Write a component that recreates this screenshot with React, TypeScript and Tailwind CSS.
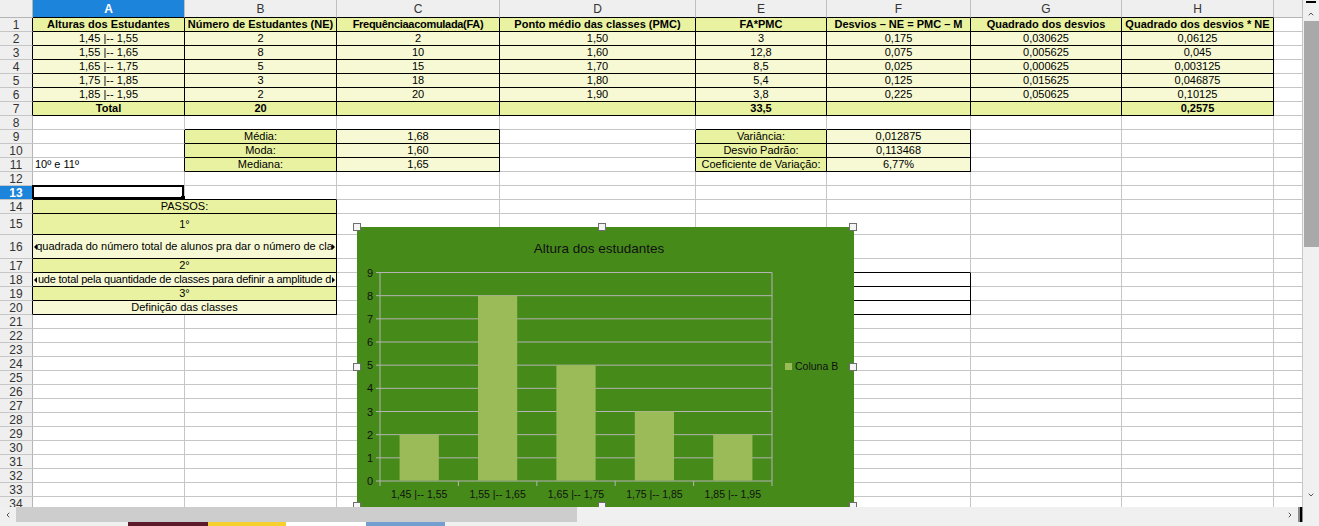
import type { ReactNode } from 'react';
import { ChevronDown, ChevronLeft, ChevronRight, ChevronUp } from 'lucide-react';

// column widths include the right grid line
const COL_W = [
  'w-[152px]',
  'w-[152px]',
  'w-[163px]',
  'w-[196px]',
  'w-[131px]',
  'w-[144px]',
  'w-[151px]',
  'w-[152px]',
  'flex-1 min-w-0',
];
const LETTERS = ['A', 'B', 'C', 'D', 'E', 'F', 'G', 'H', ''];

type Tone = 'strong' | 'pale';

interface Cell {
  col: number;
  span?: number;
  text?: ReactNode;
  tone?: Tone;
  bold?: boolean;
  boxed?: boolean;
  left?: boolean;
  clip?: boolean;
  tight?: boolean;
  cursor?: boolean;
}

interface Row {
  n: number;
  h: string;
  cells: Cell[];
}

function Wavy({ children }: { children: ReactNode }) {
  return (
    <span className="underline decoration-wavy decoration-[#e8261f] decoration-1 underline-offset-2">
      {children}
    </span>
  );
}

const box = (col: number, text: ReactNode, tone?: Tone, bold = false): Cell => ({
  col,
  text,
  tone,
  bold,
  boxed: true,
});

const DATA = [
  ['1,45 |-- 1,55', '2', '2', '1,50', '3', '0,175', '0,030625', '0,06125'],
  ['1,55 |-- 1,65', '8', '10', '1,60', '12,8', '0,075', '0,005625', '0,045'],
  ['1,65 |-- 1,75', '5', '15', '1,70', '8,5', '0,025', '0,000625', '0,003125'],
  ['1,75 |-- 1,85', '3', '18', '1,80', '5,4', '0,125', '0,015625', '0,046875'],
  ['1,85 |-- 1,95', '2', '20', '1,90', '3,8', '0,225', '0,050625', '0,10125'],
];

const HEAD: ReactNode[] = [
  'Alturas dos Estudantes',
  'Número de Estudantes (NE)',
  <span>
    Frequência<Wavy>acomulada(FA)</Wavy>
  </span>,
  <span>
    Ponto médio das classes <Wavy>(PMC)</Wavy>
  </span>,
  <Wavy>FA*PMC</Wavy>,
  <span>
    Desvios – NE = <Wavy>PMC</Wavy> – M
  </span>,
  'Quadrado dos desvios',
  'Quadrado dos desvios * NE',
];

const ROWS: Row[] = [];
ROWS.push({
  n: 1,
  h: 'h-[14px]',
  cells: HEAD.map((t, i) => ({ ...box(i, t, 'strong', true), tight: i === 2 })),
});
DATA.forEach((r, i) =>
  ROWS.push({ n: i + 2, h: 'h-[14px]', cells: r.map((t, c) => box(c, t, 'pale')) }),
);
ROWS.push({
  n: 7,
  h: 'h-[14px]',
  cells: ['Total', '20', '', '', '33,5', '', '', '0,2575'].map((t, c) => box(c, t, 'strong', true)),
});
ROWS.push({ n: 8, h: 'h-[14px]', cells: [] });
ROWS.push({
  n: 9,
  h: 'h-[14px]',
  cells: [box(1, 'Média:', 'strong'), box(2, '1,68', 'pale'), box(4, 'Variância:', 'strong'), box(5, '0,012875', 'pale')],
});
ROWS.push({
  n: 10,
  h: 'h-[14px]',
  cells: [box(1, 'Moda:', 'strong'), box(2, '1,60', 'pale'), box(4, 'Desvio Padrão:', 'strong'), box(5, '0,113468', 'pale')],
});
ROWS.push({
  n: 11,
  h: 'h-[14px]',
  cells: [
    { col: 0, text: '10º e 11º', left: true },
    box(1, 'Mediana:', 'strong'),
    box(2, '1,65', 'pale'),
    box(4, 'Coeficiente de Variação:', 'strong'),
    box(5, '6,77%', 'pale'),
  ],
});
ROWS.push({ n: 12, h: 'h-[14px]', cells: [] });
ROWS.push({ n: 13, h: 'h-[14px]', cells: [{ col: 0, cursor: true }] });
ROWS.push({ n: 14, h: 'h-[14px]', cells: [{ ...box(0, 'PASSOS:', 'strong'), span: 2 }] });
ROWS.push({ n: 15, h: 'h-[21px]', cells: [{ ...box(0, '1°', 'strong'), span: 2 }] });
ROWS.push({
  n: 16,
  h: 'h-[24px]',
  cells: [{ ...box(0, 'quadrada do número total de alunos pra dar o número de cla', 'pale'), span: 2, clip: true }],
});
ROWS.push({ n: 17, h: 'h-[14px]', cells: [{ ...box(0, '2°', 'strong'), span: 2 }] });
ROWS.push({
  n: 18,
  h: 'h-[14px]',
  cells: [
    {
      ...box(0, 'ude total pela quantidade de classes para definir a amplitude d', 'pale'),
      span: 2,
      clip: true,
      tight: true,
    },
    box(4, ''),
    box(5, ''),
  ],
});
ROWS.push({ n: 19, h: 'h-[14px]', cells: [{ ...box(0, '3°', 'strong'), span: 2 }, box(4, ''), box(5, '')] });
ROWS.push({
  n: 20,
  h: 'h-[14px]',
  cells: [{ ...box(0, 'Definição das classes', 'pale'), span: 2 }, box(4, ''), box(5, '')],
});
for (let n = 21; n <= 34; n++) ROWS.push({ n, h: 'h-[14px]', cells: [] });

function boxedAt(ri: number, col: number) {
  const row = ROWS[ri];
  if (!row) return false;
  return row.cells.some((c) => c.boxed && col >= c.col && col < c.col + (c.span ?? 1));
}

function CellContent({ cell }: { cell: Cell }) {
  if (cell.cursor) {
    return (
      <div className="absolute -left-px -top-px right-0 bottom-0 border-2 border-black">
        <div className="absolute -right-[4px] -bottom-[4px] h-[5px] w-[5px] bg-black" />
      </div>
    );
  }
  if (cell.clip) {
    return (
      <div className="flex h-full w-full items-center">
        <span className="ml-px h-0 w-0 shrink-0 border-y-[3px] border-r-[3px] border-y-transparent border-r-black" />
        <div
          className={`flex min-w-0 flex-1 justify-center overflow-hidden whitespace-nowrap text-[11px] ${
            cell.tight ? 'tracking-[-0.2px]' : ''
          }`}
        >
          <span>{cell.text}</span>
        </div>
        <span className="mr-px h-0 w-0 shrink-0 border-y-[3px] border-l-[3px] border-y-transparent border-l-black" />
      </div>
    );
  }
  return (
    <div
      className={`flex h-full w-full items-center overflow-hidden whitespace-nowrap text-[11px] ${
        cell.left ? 'justify-start pl-[2px]' : 'justify-center'
      } ${cell.bold ? 'font-bold' : ''} ${cell.tight ? 'tracking-[-0.3px]' : ''}`}
    >
      <span>{cell.text}</span>
    </div>
  );
}

function SheetRow({ row, ri }: { row: Row; ri: number }) {
  const items: ReactNode[] = [];
  let col = 0;
  while (col < 9) {
    const cell = row.cells.find((c) => c.col === col);
    const span = cell?.span ?? 1;
    const last = col + span - 1;
    const rightBlack = boxedAt(ri, last) || boxedAt(ri, last + 1);
    const bottomBlack = boxedAt(ri, col) || boxedAt(ri + 1, col);
    const wClass = span === 2 && col === 0 ? 'w-[304px]' : COL_W[col];
    const bg =
      cell?.tone === 'strong' ? 'bg-[#e8f2a1]' : cell?.tone === 'pale' ? 'bg-[#f6f9d4]' : 'bg-white';
    items.push(
      <div
        key={col}
        className={`relative shrink-0 border-r border-b ${wClass} ${bg} ${
          rightBlack ? 'border-r-black' : 'border-r-[#c6c6c6]'
        } ${bottomBlack ? 'border-b-black' : 'border-b-[#c6c6c6]'}`}
      >
        {cell && <CellContent cell={cell} />}
      </div>,
    );
    col += span;
  }
  const selected = row.n === 13;
  return (
    <div className={`flex shrink-0 ${row.h}`}>
      <div
        className={`flex w-[33px] shrink-0 items-center justify-center border-r border-b border-b-[#c6c6c6] text-[12px] ${
          boxedAt(ri, 0) ? 'border-r-black' : 'border-r-[#b5b5b5]'
        } ${selected ? 'bg-[#1d84dc] font-bold text-white' : 'bg-[#efefef] text-[#333]'}`}
      >
        {row.n}
      </div>
      {items}
    </div>
  );
}

function HeaderRow() {
  return (
    <div className="flex h-[18px] shrink-0">
      <div className="w-[33px] shrink-0 border-r border-b border-[#b5b5b5] bg-[#efefef]" />
      {LETTERS.map((l, i) => (
        <div
          key={i}
          className={`flex shrink-0 items-center justify-center border-r border-b border-r-[#c0c0c0] text-[12px] ${COL_W[i]} ${
            boxedAt(0, i) ? 'border-b-black' : 'border-b-[#b5b5b5]'
          } ${i === 0 ? 'bg-[#1d84dc] font-bold text-white' : 'bg-[#efefef] text-[#333]'}`}
        >
          {l}
        </div>
      ))}
    </div>
  );
}

const BARS = [2, 8, 5, 3, 2];
const LABELS = ['1,45 |-- 1,55', '1,55 |-- 1,65', '1,65 |-- 1,75', '1,75 |-- 1,85', '1,85 |-- 1,95'];

function Chart() {
  const x0 = 23;
  const x1 = 415;
  const y0 = 254;
  const yTop = 45.5;
  const unit = (y0 - yTop) / 9;
  const cat = (x1 - x0) / 5;
  const grid = '#b4b4b4';

  return (
    <div className="absolute left-[357px] top-[227px] h-[280px] w-[497px] bg-[#468a1a]">
      <svg width="497" height="280" className="block">
        <text x={242} y={26} textAnchor="middle" fontSize="13.5" fill="#111">
          Altura dos estudantes
        </text>
        {Array.from({ length: 10 }, (_, i) => {
          const y = y0 - i * unit;
          return (
            <g key={i}>
              <line x1={x0 - 4} x2={x1} y1={y} y2={y} stroke={grid} strokeWidth={1} />
              <text x={16} y={y + 4} textAnchor="end" fontSize="11" fill="#111">
                {i}
              </text>
            </g>
          );
        })}
        <line x1={x0} x2={x0} y1={yTop} y2={y0} stroke={grid} />
        <line x1={x1} x2={x1} y1={yTop} y2={y0} stroke={grid} />
        {Array.from({ length: 6 }, (_, k) => (
          <line key={k} x1={x0 + k * cat} x2={x0 + k * cat} y1={y0} y2={y0 + 5} stroke={grid} />
        ))}
        {BARS.map((v, k) => (
          <rect
            key={k}
            x={x0 + k * cat + cat / 4}
            y={y0 - v * unit}
            width={cat / 2}
            height={v * unit - 0.5}
            fill="#9bbb59"
          />
        ))}
        {LABELS.map((l, k) => (
          <text key={l} x={x0 + k * cat + cat / 2} y={271} textAnchor="middle" fontSize="10.5" fill="#111">
            {l}
          </text>
        ))}
        <rect x={428} y={136} width={7} height={7} fill="#9bbb59" />
        <text x={438} y={143} fontSize="10.5" fill="#111">
          Coluna B
        </text>
      </svg>
      {/* selection handles */}
      <div className="absolute left-[-4px] top-[-4px] h-[8px] w-[8px] border border-[#6e6e6e] bg-[#f4f4f4]" />
      <div className="absolute left-[241px] top-[-4px] h-[8px] w-[8px] border border-[#6e6e6e] bg-[#f4f4f4]" />
      <div className="absolute left-[492px] top-[-4px] h-[8px] w-[8px] border border-[#6e6e6e] bg-[#f4f4f4]" />
      <div className="absolute left-[-4px] top-[136px] h-[8px] w-[8px] border border-[#6e6e6e] bg-[#f4f4f4]" />
      <div className="absolute left-[492px] top-[136px] h-[8px] w-[8px] border border-[#6e6e6e] bg-[#f4f4f4]" />
      <div className="absolute left-[-4px] top-[275px] h-[8px] w-[8px] border border-[#6e6e6e] bg-[#f4f4f4]" />
      <div className="absolute left-[241px] top-[275px] h-[8px] w-[8px] border border-[#6e6e6e] bg-[#f4f4f4]" />
      <div className="absolute left-[492px] top-[275px] h-[8px] w-[8px] border border-[#6e6e6e] bg-[#f4f4f4]" />
    </div>
  );
}

function VScroll() {
  return (
    <div className="flex h-[507px] w-[16px] shrink-0 flex-col items-center bg-[#f0f0f0]">
      <div className="mt-px h-[2px] w-[10px] bg-black" />
      <ChevronUp className="mt-[7px] h-[8px] w-[8px] text-[#555]" strokeWidth={3} />
      <div className="mt-[3px] ml-px h-[226px] w-[15px] bg-[#a9a9a9]" />
      <div className="flex-1" />
      <ChevronDown className="mb-[8px] h-[8px] w-[8px] text-[#555]" strokeWidth={3} />
    </div>
  );
}

function HScroll() {
  return (
    <div className="flex h-[15px] items-center bg-[#f0f0f0]">
      <div className="flex w-[16px] justify-center">
        <ChevronLeft className="h-[8px] w-[8px] text-[#555]" strokeWidth={3} />
      </div>
      <div className="h-full w-[561px] bg-[#cdcdcd]" />
      <div className="flex-1" />
      <ChevronRight className="h-[8px] w-[8px] text-[#555]" strokeWidth={3} />
      <div className="ml-[4px] flex h-full w-[5px] justify-center bg-[#8c8c8c]">
        <div className="h-full w-[2px] bg-black" />
      </div>
      <div className="w-[16px]" />
    </div>
  );
}

export default function App() {
  return (
    <div className="h-[526px] w-[1319px] overflow-hidden bg-white font-['Liberation_Sans',Arial,sans-serif] text-black">
      <div className="flex h-[507px]">
        <div className="relative flex h-[507px] w-[1303px] flex-col overflow-hidden">
          <HeaderRow />
          {ROWS.map((row, ri) => (
            <SheetRow key={row.n} row={row} ri={ri} />
          ))}
          <Chart />
        </div>
        <VScroll />
      </div>
      <HScroll />
      <div className="flex h-[4px] bg-[#f0f0f0] pl-[128px]">
        <div className="w-[80px] bg-[#5c1a2b]" />
        <div className="w-[78px] bg-[#f6d02c]" />
        <div className="w-[80px] bg-white" />
        <div className="w-[79px] bg-[#729fcf]" />
      </div>
    </div>
  );
}
